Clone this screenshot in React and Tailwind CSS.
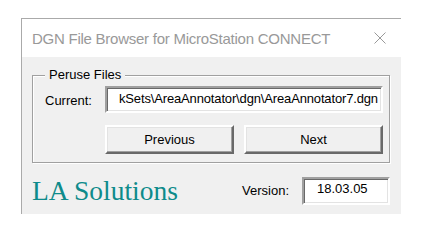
export default function App() {
  const ui = { fontFamily: '"Liberation Sans", Arial, sans-serif' };
  const sunken =
    "border-2 border-t-[#a0a0a0] border-l-[#a0a0a0] border-b-white border-r-white bg-white shadow-[inset_1px_1px_0_#696969,inset_-1px_-1px_0_#e3e3e3]";
  const raised =
    "border-2 border-t-white border-l-white border-b-[#696969] border-r-[#696969] bg-[#f0f0f0] shadow-[inset_-1px_-1px_0_#a0a0a0,inset_1px_1px_0_#e3e3e3] flex items-center justify-center text-[13px] leading-none text-black";

  return (
    <div className="min-h-screen bg-white pt-[18px] pl-[21px]" style={ui}>
      <div className="w-[380px] border-l border-t border-[#aaaaaa]">
        {/* Title bar */}
        <div className="h-[38px] bg-white flex items-center justify-between pl-[10px] pr-[15px]">
          <span className="text-[15px] tracking-[-0.25px] text-[#999999] leading-none">
            DGN File Browser for MicroStation CONNECT
          </span>
          <svg width="12" height="12" viewBox="0 0 12 12">
            <path d="M0.5 0.5 L11.5 11.5 M11.5 0.5 L0.5 11.5" stroke="#999999" strokeWidth="1" />
          </svg>
        </div>

        {/* Body */}
        <div className="h-[157px] bg-[#f0f0f0] pt-[18px] pl-[10px]">
          {/* Group box */}
          <div className="relative w-[358px] h-[88px] border border-[#a0a0a0] shadow-[inset_1px_1px_0_#fff,1px_1px_0_#fff] pt-[10px] pl-[12px]">
            <span className="absolute -top-[8px] left-[12px] px-[4px] bg-[#f0f0f0] text-[13px] leading-[14px] text-black">
              Peruse Files
            </span>
            <div className="flex items-center">
              <span className="w-[60px] text-[13px] leading-none text-black pt-[2px]">Current:</span>
              <div className={`${sunken} w-[278px] h-[27px] pl-[12px] pt-[4px] overflow-hidden whitespace-nowrap text-[13px] tracking-[-0.15px] leading-[13px] text-black`}>
                kSets\AreaAnnotator\dgn\AreaAnnotator7.dgn
              </div>
            </div>
            <div className="flex gap-[10px] mt-[12px] ml-[60px]">
              <button className={`${raised} w-[129px] h-[29px]`}>Previous</button>
              <button className={`${raised} w-[139px] h-[29px]`}>Next</button>
            </div>
          </div>

          {/* Footer row */}
          <div className="flex items-center mt-[14px] pr-[11px]">
            <span
              className="text-[27.5px] leading-none text-[#0e8b8b]"
              style={{ fontFamily: '"Liberation Serif", "Times New Roman", serif' }}
            >
              LA Solutions
            </span>
            <div className="ml-auto flex items-center gap-[13px]">
              <span className="text-[13px] leading-none text-black -mt-[2px]">Version:</span>
              <div className={`${sunken} w-[88px] h-[28px] pl-[13px] pt-[3px] text-[13px] leading-[13px] text-black`}>
                18.03.05
              </div>
            </div>
          </div>
        </div>
      </div>
    </div>
  );
}
